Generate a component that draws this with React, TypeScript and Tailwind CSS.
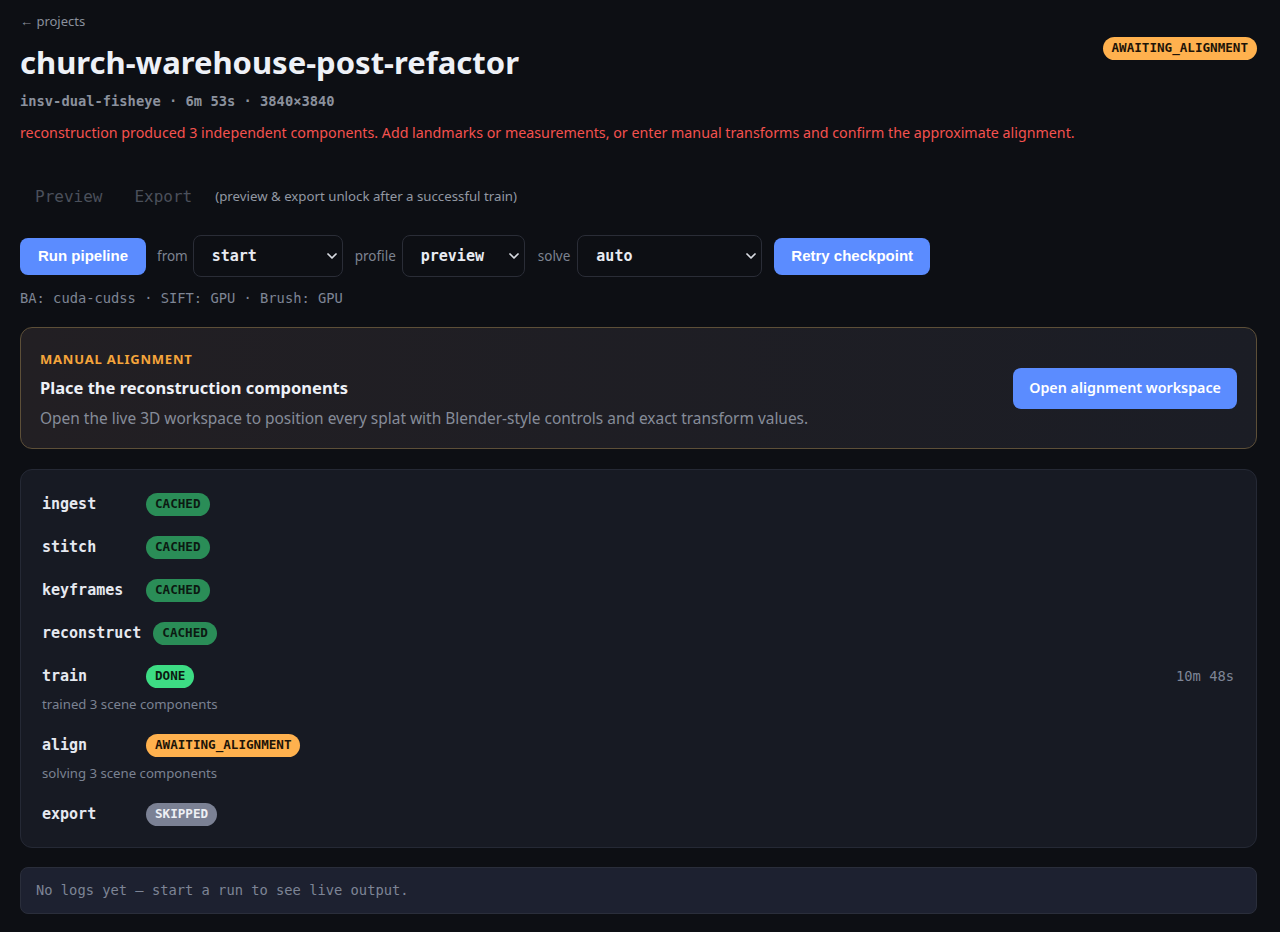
import React from "react";

const SANS = { fontFamily: '"Noto Sans", "Open Sans", sans-serif' };
const MONO = { fontFamily: '"DejaVu Sans Mono", "Liberation Mono", monospace' };

function Chevron() {
  return (
    <svg width="16" height="16" viewBox="0 0 24 24" fill="none" stroke="currentColor" strokeWidth="2.6" strokeLinecap="round" strokeLinejoin="round">
      <path d="M6 9l6 6 6-6" />
    </svg>
  );
}

function Select({ value, width }: { value: string; width: string }) {
  return (
    <div
      className={`${width} h-[42px] rounded-lg border border-[#2a2d37] bg-[#0d0f14] flex items-center justify-between pl-[18px] pr-[2px] text-[#e8ebf2]`}
    >
      <span className="text-[15px] font-bold" style={MONO}>{value}</span>
      <span className="text-[#d8dbe2]"><Chevron /></span>
    </div>
  );
}

type BadgeKind = "cached" | "done" | "awaiting" | "skipped";

function Badge({ kind, label }: { kind: BadgeKind; label: string }) {
  const cls =
    kind === "cached"
      ? "bg-[#2a8d57] text-[#0c1a12]"
      : kind === "done"
      ? "bg-[#3ddc84] text-[#0b1a10]"
      : kind === "awaiting"
      ? "bg-[#ffb14e] text-[#1d1408]"
      : "bg-[#7b8194] text-[#eef0f4]";
  return (
    <span
      className={`inline-flex h-[23px] items-center rounded-full px-[9px] text-[12.6px] font-bold leading-none ${cls}`}
      style={MONO}
    >
      {label}
    </span>
  );
}

function Stage({
  name,
  kind,
  label,
  sub,
  time,
}: {
  name: string;
  kind: BadgeKind;
  label: string;
  sub?: string;
  time?: string;
}) {
  return (
    <div className="py-[10px]">
      <div className="flex items-center h-[23px]">
        <span className="min-w-[92px] mr-3 text-[15px] font-bold text-[#e6e9f0]" style={MONO}>
          {name}
        </span>
        <Badge kind={kind} label={label} />
        {time && (
          <span className="ml-auto text-[13.75px] text-[#7e8596]" style={MONO}>
            {time}
          </span>
        )}
      </div>
      {sub && (
        <div className="mt-[6px] text-[13.2px] leading-[20px] text-[#7b8292]" style={SANS}>
          {sub}
        </div>
      )}
    </div>
  );
}

export default function App() {
  return (
    <div className="min-h-[932px] bg-[#0d0f14] text-[#e8ecf4]" style={SANS}>
      <div className="pl-5 pr-[23px] pt-3 pb-5">
        <div className="flex items-start justify-between">
          <div>
            <div className="text-[13px] leading-[18px] text-[#8a909c]">← projects</div>
            <h1 className="mt-3 text-[31px] leading-[40px] font-bold text-[#eef1f7]">
              church-warehouse-post-refactor
            </h1>
            <div className="mt-[9px] text-[13.75px] leading-[20px] font-bold text-[#8b919d]" style={MONO}>
              insv-dual-fisheye · 6m 53s · 3840×3840
            </div>
            <div className="mt-[12px] text-[14.25px] leading-[20px] text-[#f4524f]">
              reconstruction produced 3 independent components. Add landmarks or measurements, or enter manual transforms and confirm the approximate alignment.
            </div>
          </div>
          <div className="mt-[22px]">
            <Badge kind="awaiting" label="AWAITING_ALIGNMENT" />
          </div>
        </div>

        <div className="mt-[33px] flex items-center h-[40px] pt-[1px]">
          <span className="pl-[15px] pr-[14px] text-[16px] text-[#4b505b]" style={MONO}>Preview</span>
          <span className="ml-[4px] pl-[14px] pr-[14px] text-[16px] text-[#4b505b]" style={MONO}>Export</span>
          <span className="ml-[9px] text-[13.25px] text-[#9298a3]">(preview &amp; export unlock after a successful train)</span>
        </div>

        <div className="mt-[19px] flex items-center">
          <button
            className="h-[37px] rounded-lg bg-[#5b8cff] px-[18px] text-[15px] font-bold text-white"
            style={{ fontFamily: '"Liberation Sans", Arial, sans-serif' }}
          >
            Run pipeline
          </button>
          <span className="ml-[11px] mr-[5px] text-[13.5px] text-[#7d8391]">from</span>
          <Select value="start" width="w-[150px]" />
          <span className="ml-[12px] mr-[6px] text-[13.5px] text-[#7d8391]">profile</span>
          <Select value="preview" width="w-[123px]" />
          <span className="ml-[13px] mr-[7px] text-[13.5px] text-[#7d8391]">solve</span>
          <Select value="auto" width="w-[185px]" />
          <button
            className="ml-3 h-[37px] rounded-lg bg-[#5b8cff] px-[17px] text-[15px] font-bold text-white"
            style={{ fontFamily: '"Liberation Sans", Arial, sans-serif' }}
          >
            Retry checkpoint
          </button>
        </div>

        <div className="mt-[11px] text-[13.75px] leading-[20px] text-[#7e8594]" style={MONO}>
          BA: cuda-cudss · SIFT: GPU · Brush: GPU
        </div>

        <div className="mt-[19px] flex items-center justify-between rounded-xl border border-[#5d4f38] bg-gradient-to-r from-[#221f23] to-[#1b1d25] pl-[19px] pr-[19px] h-[122px]">
          <div className="pt-[4px]">
            <div className="text-[13px] font-bold tracking-[0.06em] text-[#f5a53b]">MANUAL ALIGNMENT</div>
            <div className="mt-[6px] text-[16.5px] font-bold text-[#eef1f7]">Place the reconstruction components</div>
            <div className="mt-[6px] text-[15.45px] text-[#868c99]">
              Open the live 3D workspace to position every splat with Blender-style controls and exact transform values.
            </div>
          </div>
          <button className="h-[41px] rounded-lg bg-[#5b8cff] px-[16px] text-[14.3px] font-semibold text-white">
            Open alignment workspace
          </button>
        </div>

        <div className="mt-5 rounded-xl border border-[#252935] bg-[#171a23] pl-[21px] pr-[22px] pt-[13px] pb-[11px]">
          <Stage name="ingest" kind="cached" label="CACHED" />
          <Stage name="stitch" kind="cached" label="CACHED" />
          <Stage name="keyframes" kind="cached" label="CACHED" />
          <Stage name="reconstruct" kind="cached" label="CACHED" />
          <Stage name="train" kind="done" label="DONE" sub="trained 3 scene components" time="10m 48s" />
          <Stage name="align" kind="awaiting" label="AWAITING_ALIGNMENT" sub="solving 3 scene components" />
          <Stage name="export" kind="skipped" label="SKIPPED" />
        </div>

        <div className="mt-[19px] rounded-lg border border-[#2a2e3b] bg-[#1d2130] px-[15px] h-[47px] flex items-center">
          <span className="text-[13.75px] text-[#7d8596]" style={MONO}>
            No logs yet — start a run to see live output.
          </span>
        </div>
      </div>
    </div>
  );
}
